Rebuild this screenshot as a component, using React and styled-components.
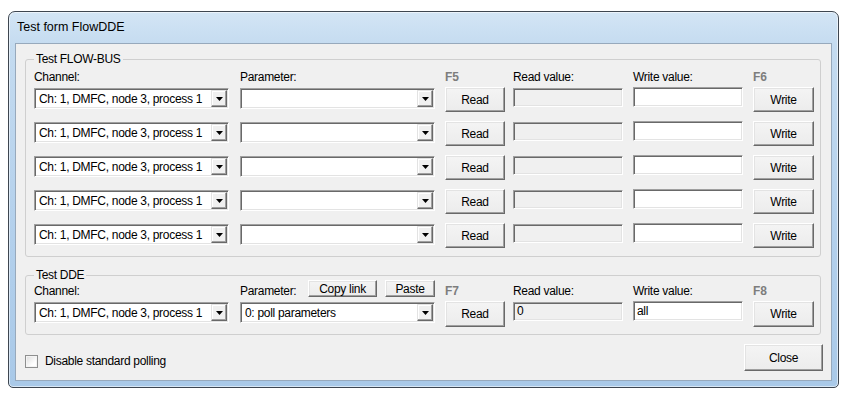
import React from "react";
import styled, { createGlobalStyle } from "styled-components";

const Global = createGlobalStyle`
  html, body { margin: 0; padding: 0; background: #ffffff; }
  body { font-family: "Liberation Sans", Arial, sans-serif; font-size: 12px; color: #000; }
  * { box-sizing: border-box; }
`;

const Window = styled.div`
  margin: 11px 0 0 8px;
  width: 831px;
  height: 377px;
  border: 1px solid #3e4650;
  border-radius: 7px 7px 5px 5px;
  background: linear-gradient(to bottom, #d3e5f5 0%, #c4dbf0 9%, #b3d0ec 60%, #a9c9e8 100%);
  box-shadow: inset 0 0 0 1px rgba(255, 255, 255, 0.55);
  display: flex;
  flex-direction: column;
`;

const TitleBar = styled.div`
  height: 31px;
  line-height: 31px;
  padding-left: 8px;
  font-size: 12.5px;
  color: #000;
`;

const Client = styled.div`
  flex: 1;
  margin: 0 6px 6px 6px;
  border: 1px solid #97a9bc;
  background: #f0f0f0;
  padding: 0 10px 0 9px;
  display: flex;
  flex-direction: column;
  letter-spacing: -0.3px;
`;

const Group = styled.fieldset`
  margin: ${(p) => p.$top}px 0 0 0;
  padding: ${(p) => p.$pt}px 6px ${(p) => p.$pb}px 8px;
  border: 1px solid #cfcfcf;
  border-radius: 3px;
  min-width: 0;
`;

const Legend = styled.legend`
  padding: 0 2px;
  line-height: 14px;
  font-size: 12px;
`;

const Columns = styled.div`
  display: grid;
  grid-template-columns: 206px 205px 68px 120px 120px 61px;
  align-items: ${(p) => p.$align || "start"};
`;

const HeaderRow = styled(Columns)`
  height: ${(p) => p.$h}px;
  margin-top: ${(p) => p.$mt || 0}px;
`;

const Label = styled.span`
  line-height: 14px;
  white-space: nowrap;
`;

const Key = styled.span`
  line-height: 14px;
  font-weight: bold;
  color: #7d7d7d;
  letter-spacing: 0;
`;

const ParamHead = styled.div`
  display: flex;
  align-items: flex-end;
  justify-content: space-between;
  width: 195px;
  height: 100%;
`;

const HeadButtons = styled.div`
  display: flex;
  gap: 8px;
  align-self: flex-start;
`;

const Rows = styled.div`
  display: flex;
  flex-direction: column;
  gap: 9px;
  margin-top: 3px;
`;

const Row = styled(Columns)`
  height: ${(p) => p.$h}px;
`;

const sunken = `
  border: 1px solid;
  border-color: #a0a0a0 #ffffff #ffffff #a0a0a0;
  box-shadow: inset 1px 1px 0 #696969, inset -1px -1px 0 #e3e3e3;
`;

const Combo = styled.div`
  ${sunken}
  margin-top: 1px;
  width: 195px;
  height: 21px;
  background: #fff;
  display: flex;
  align-items: center;
  padding: 2px 2px 2px 4px;
`;

const ComboText = styled.span`
  flex: 1;
  white-space: nowrap;
  overflow: hidden;
`;

const ArrowBtn = styled.span`
  width: 16px;
  height: 17px;
  margin-right: -1px;
  background: #f0f0f0;
  border: 1px solid;
  border-color: #e3e3e3 #696969 #696969 #e3e3e3;
  box-shadow: inset -1px -1px 0 #a0a0a0, inset 1px 1px 0 #ffffff;
  display: flex;
  align-items: center;
  justify-content: center;
`;

const Field = styled.div`
  ${sunken}
  margin-top: ${(p) => p.$mt}px;
  width: 110px;
  height: ${(p) => p.$h}px;
  background: ${(p) => (p.$disabled ? "#f0f0f0" : "#ffffff")};
  padding: 0 3px;
  line-height: ${(p) => p.$h - 2}px;
  white-space: nowrap;
`;

const Button = styled.button`
  font-family: "Liberation Sans", Arial, sans-serif;
  font-size: 12px;
  letter-spacing: -0.3px;
  color: #000;
  width: ${(p) => p.$w}px;
  height: ${(p) => p.$h}px;
  padding: 0;
  background: linear-gradient(to bottom, #f4f4f4, #ececec);
  border: 1px solid;
  border-color: #ffffff #696969 #696969 #ffffff;
  box-shadow: inset -1px -1px 0 #a0a0a0, inset 1px 1px 0 #e3e3e3;
  cursor: default;
`;

const Footer = styled.div`
  margin-top: 9px;
  margin-right: -2px;
  display: flex;
  align-items: center;
  justify-content: space-between;
`;

const CheckRow = styled.label`
  margin-top: 7px;
  display: flex;
  align-items: center;
  gap: 7px;
  line-height: 14px;
`;

const CheckBox = styled.span`
  width: 13px;
  height: 13px;
  border: 1px solid #8e8f8f;
  background: linear-gradient(135deg, #dcdcdc 0%, #ffffff 70%);
  box-shadow: inset 0 0 0 1px #f4f4f4;
`;

const Arrow = () => (
  <svg width="7" height="4" viewBox="0 0 7 4">
    <path d="M0 0h7L3.5 4z" fill="#000" />
  </svg>
);

const ComboBox = ({ value }) => (
  <Combo>
    <ComboText>{value}</ComboText>
    <ArrowBtn>
      <Arrow />
    </ArrowBtn>
  </Combo>
);

const CH = "Ch: 1, DMFC, node 3, process 1";

export default function App() {
  const rows = [0, 1, 2, 3, 4];
  return (
    <>
      <Global />
      <Window>
        <TitleBar>Test form FlowDDE</TitleBar>
        <Client>
          <Group $top={8} $pt={4} $pb={8}>
            <Legend>Test FLOW-BUS</Legend>
            <HeaderRow $h={14}>
              <Label>Channel:</Label>
              <Label>Parameter:</Label>
              <Key>F5</Key>
              <Label>Read value:</Label>
              <Label>Write value:</Label>
              <Key>F6</Key>
            </HeaderRow>
            <Rows>
              {rows.map((r) => (
                <Row key={r} $h={25}>
                  <ComboBox value={CH} />
                  <ComboBox value="" />
                  <Button $w={60} $h={25}>Read</Button>
                  <Field $disabled $mt={1} $h={19} />
                  <Field $mt={0} $h={20} />
                  <Button $w={61} $h={25}>Write</Button>
                </Row>
              ))}
            </Rows>
          </Group>
          <Group $top={11} $pt={0} $pb={7}>
            <Legend>Test DDE</Legend>
            <HeaderRow $h={18} $mt={-2} $align="end">
              <Label>Channel:</Label>
              <ParamHead>
                <Label>Parameter:</Label>
                <HeadButtons>
                  <Button $w={69} $h={17}>Copy link</Button>
                  <Button $w={50} $h={17}>Paste</Button>
                </HeadButtons>
              </ParamHead>
              <Key>F7</Key>
              <Label>Read value:</Label>
              <Label>Write value:</Label>
              <Key>F8</Key>
            </HeaderRow>
            <Rows>
              <Row $h={26}>
                <ComboBox value={CH} />
                <ComboBox value="0: poll parameters" />
                <Button $w={60} $h={26}>Read</Button>
                <Field $disabled $mt={1} $h={19}>0</Field>
                <Field $mt={0} $h={20}>all</Field>
                <Button $w={61} $h={26}>Write</Button>
              </Row>
            </Rows>
          </Group>
          <Footer>
            <CheckRow>
              <CheckBox />
              <span>Disable standard polling</span>
            </CheckRow>
            <Button $w={79} $h={27}>Close</Button>
          </Footer>
        </Client>
      </Window>
    </>
  );
}
